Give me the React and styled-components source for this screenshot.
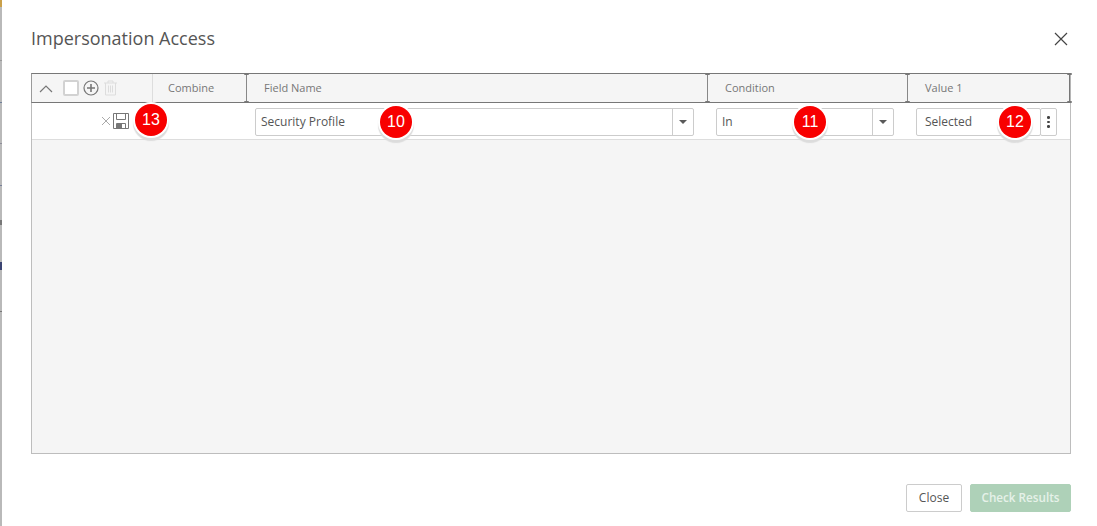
import React from "react";
import styled, { createGlobalStyle } from "styled-components";

const Global = createGlobalStyle`
  html, body { margin: 0; padding: 0; background: #fff; }
  body { font-family: "Open Sans", "Liberation Sans", sans-serif; }
  * { box-sizing: border-box; }
`;

const Page = styled.div`
  width: 1097px; height: 526px; display: flex; overflow: hidden; background: #fff;
`;
const Edge = styled.div`
  width: 2px; height: 100%;
  background: linear-gradient(#c9a04a 0 7px, #b9b9b9 7px 60px, #999 60px 61px, #b9b9b9 61px 102px, #6f7f99 102px 103px,
    #b9b9b9 103px 143px, #8d8d99 143px 144px, #b9b9b9 144px 185px, #777f99 185px 186px, #b9b9b9 186px 220px,
    #777 220px 225px, #b9b9b9 225px 262px, #3b4472 262px 270px, #b9b9b9 270px 311px, #777 311px 312px, #b9b9b9 312px);
`;
const Modal = styled.div`
  flex: 1; display: flex; flex-direction: column; padding: 0 26px 14px 29px;
`;
const Header = styled.header`
  height: 73px; display: flex; align-items: flex-start; justify-content: space-between; padding-top: 26px;
`;
const Title = styled.h1`
  margin: 0; font-size: 18px; line-height: 25px; font-weight: 400; color: #555;
`;
const CloseX = styled.svg`
  width: 15px; height: 15px; margin: 5px 3px 0 0; stroke: #444; stroke-width: 1.2; fill: none;
`;
const Grid = styled.div`
  height: 381px; border: 1px solid #bdbdbd; border-top: 0; background: #f5f5f5; display: flex; flex-direction: column;
`;
const HeadRow = styled.div`
  height: 30px; display: grid; grid-template-columns: 120px 94px 461px 200px 1fr; background: #f5f5f5;
  border-top: 1px solid #777; border-bottom: 1px solid #777; margin: 0 -1px;
  border-left: 1px solid #9a9a9a; border-right: 1px solid #b5b5b5;
`;
const HeadCell = styled.div`
  position: relative; display: flex; align-items: center; font-size: 11px; color: #777;
  padding: 0 0 2px 17px;
  ${p => p.$plain && "border-left: 1px solid #ddd; padding-left: 15px;"}
  ${p => p.$handle && "border-left: 1px solid #888;"}
  ${p => p.$tools && "padding: 0 0 0 7px; gap: 4px;"}
  ${p => p.$end && "border-right: 1px solid #777;"}
`;
const Cap = styled.i`
  position: absolute; width: 5px; height: 2px; background: #777; border-radius: 1px;
  ${p => (p.$right ? "right: -3px;" : "left: -3px;")}
  ${p => (p.$bottom ? "bottom: -1px;" : "top: -1px;")}
`;
const BodyRow = styled.div`
  height: 37px; display: grid; grid-template-columns: 120px 94px 461px 200px 1fr; background: #fff;
  border-bottom: 1px solid #ddd; align-items: center; padding-top: 2px;
`;
const Actions = styled.div`
  position: relative; display: flex; justify-content: flex-end; align-items: center; gap: 2px;
  padding-right: 23px; margin-top: -3px;
`;
const Field = styled.div`
  height: 28px; display: flex; align-items: center; background: #fff; border: 1px solid #ccc; border-radius: 2px;
  position: relative; font-size: 12px; color: #555; padding: 0 0 2px ${p => p.$pad || 5}px;
  margin-left: ${p => p.$ml}px; width: ${p => p.$w}px; flex-shrink: 0;
`;
const Arrow = styled.span`
  position: absolute; right: 0; top: 0; bottom: 0; width: 21px; border-left: 1px solid #ccc;
  display: flex; align-items: center; justify-content: center;
  &::after { content: ""; border: 4px solid transparent; border-top: 4px solid #5a5a5a; margin-top: 4px; }
`;
const ValueWrap = styled.div`
  display: flex; align-items: center;
`;
const More = styled.button`
  width: 17px; height: 28px; padding: 0; background: #fff; border: 1px solid #ccc; border-radius: 2px; margin-left: -1px;
  display: flex; flex-direction: column; align-items: center; justify-content: center; gap: 2px;
  & i { width: 2.5px; height: 2.5px; border-radius: 50%; background: #444; }
`;
const Badge = styled.span`
  position: absolute; width: 32px; height: 32px; border-radius: 50%; background: #f80000; color: #fff;
  font-family: "Liberation Sans", Arial, sans-serif; font-size: 16px; display: flex; align-items: center; justify-content: center;
  left: ${p => p.$left}px; top: ${p => p.$top}px;
  box-shadow: 0 0 0 2px #fff, 0 3px 1px 2px #dcdcdc; z-index: 2;
`;
const Footer = styled.footer`
  flex: 1; display: flex; justify-content: flex-end; align-items: flex-start; gap: 8px; padding-top: 30px;
`;
const Btn = styled.button`
  height: 28px; font-family: inherit; font-size: ${p => (p.$primary ? 11.7 : 12)}px; border-radius: 2px; padding: 0 0 2px;
  width: ${p => p.$w}px;
  ${p => p.$primary
    ? "background:#aed1b8;color:#e6f1e9;border:1px solid #aed1b8;font-weight:600;"
    : "background:#fff;color:#555;border:1px solid #ccc;"}
`;
const Icon = styled.svg`
  flex-shrink: 0; fill: none; stroke: ${p => p.$c || "#888"}; stroke-width: ${p => p.$sw || 1};
`;
const Check = styled.span`
  width: 16px; height: 16px; background: #fff; border: 2px solid #d2d2d2; border-radius: 2px; margin-left: 6px; flex-shrink: 0;
`;

export default function App() {
  return (
    <Page>
      <Global />
      <Edge />
      <Modal>
        <Header>
          <Title>Impersonation Access</Title>
          <CloseX viewBox="0 0 15 15"><path d="M2 2l12 12M14 2L2 14" /></CloseX>
        </Header>
        <Grid>
          <HeadRow>
            <HeadCell $tools>
              <Icon width="14" height="9" viewBox="0 0 14 9" $c="#777" $sw={1.2}><path d="M1 8l6-6 6 6" /></Icon>
              <Check />
              <Icon width="16" height="16" viewBox="0 0 16 16" $c="#777" $sw={1.2}>
                <circle cx="8" cy="8" r="7" /><path d="M8 4v8M4 8h8" strokeWidth="1.6" />
              </Icon>
              <Icon width="15" height="16" viewBox="0 0 15 16" $c="#ddd" $sw={1}>
                <path d="M1 3h13M5 3V1h5v2M2.5 3v12h10V3M5.5 5.5v7M7.5 5.5v7M9.5 5.5v7" />
              </Icon>
            </HeadCell>
            <HeadCell $plain>Combine</HeadCell>
            <HeadCell $handle><Cap /><Cap $bottom />Field Name</HeadCell>
            <HeadCell $handle><Cap /><Cap $bottom />Condition</HeadCell>
            <HeadCell $handle $end><Cap /><Cap $bottom /><Cap $right /><Cap $right $bottom />Value 1</HeadCell>
          </HeadRow>
          <BodyRow>
            <Actions>
              <Icon width="10" height="10" viewBox="0 0 10 10" $c="#aaa"><path d="M1 1l8 8M9 1l-8 8" /></Icon>
              <Icon width="16" height="16" viewBox="0 0 16 16" $c="#777">
                <path d="M.5.5h15v15H.5zM3.5.5v6h9v-6M3.5 15.5v-5h9v5" />
                <path d="M4 11h5v4.5H4z" fill="#777" stroke="none" />
              </Icon>
              <Badge $left={103} $top={-9}>13</Badge>
            </Actions>
            <div />
            <Field $ml={9} $w={439}>Security Profile<Arrow /><Badge $left={124} $top={-3}>10</Badge></Field>
            <Field $ml={9} $w={178}>In<Arrow /><Badge $left={77} $top={-3}>11</Badge></Field>
            <ValueWrap>
              <Field $ml={9} $w={125} $pad={8}>Selected<Badge $left={82} $top={-3}>12</Badge></Field>
              <More aria-label="More"><i /><i /><i /></More>
            </ValueWrap>
          </BodyRow>
        </Grid>
        <Footer>
          <Btn $w={56}>Close</Btn>
          <Btn $w={101} $primary>Check Results</Btn>
        </Footer>
      </Modal>
    </Page>
  );
}
